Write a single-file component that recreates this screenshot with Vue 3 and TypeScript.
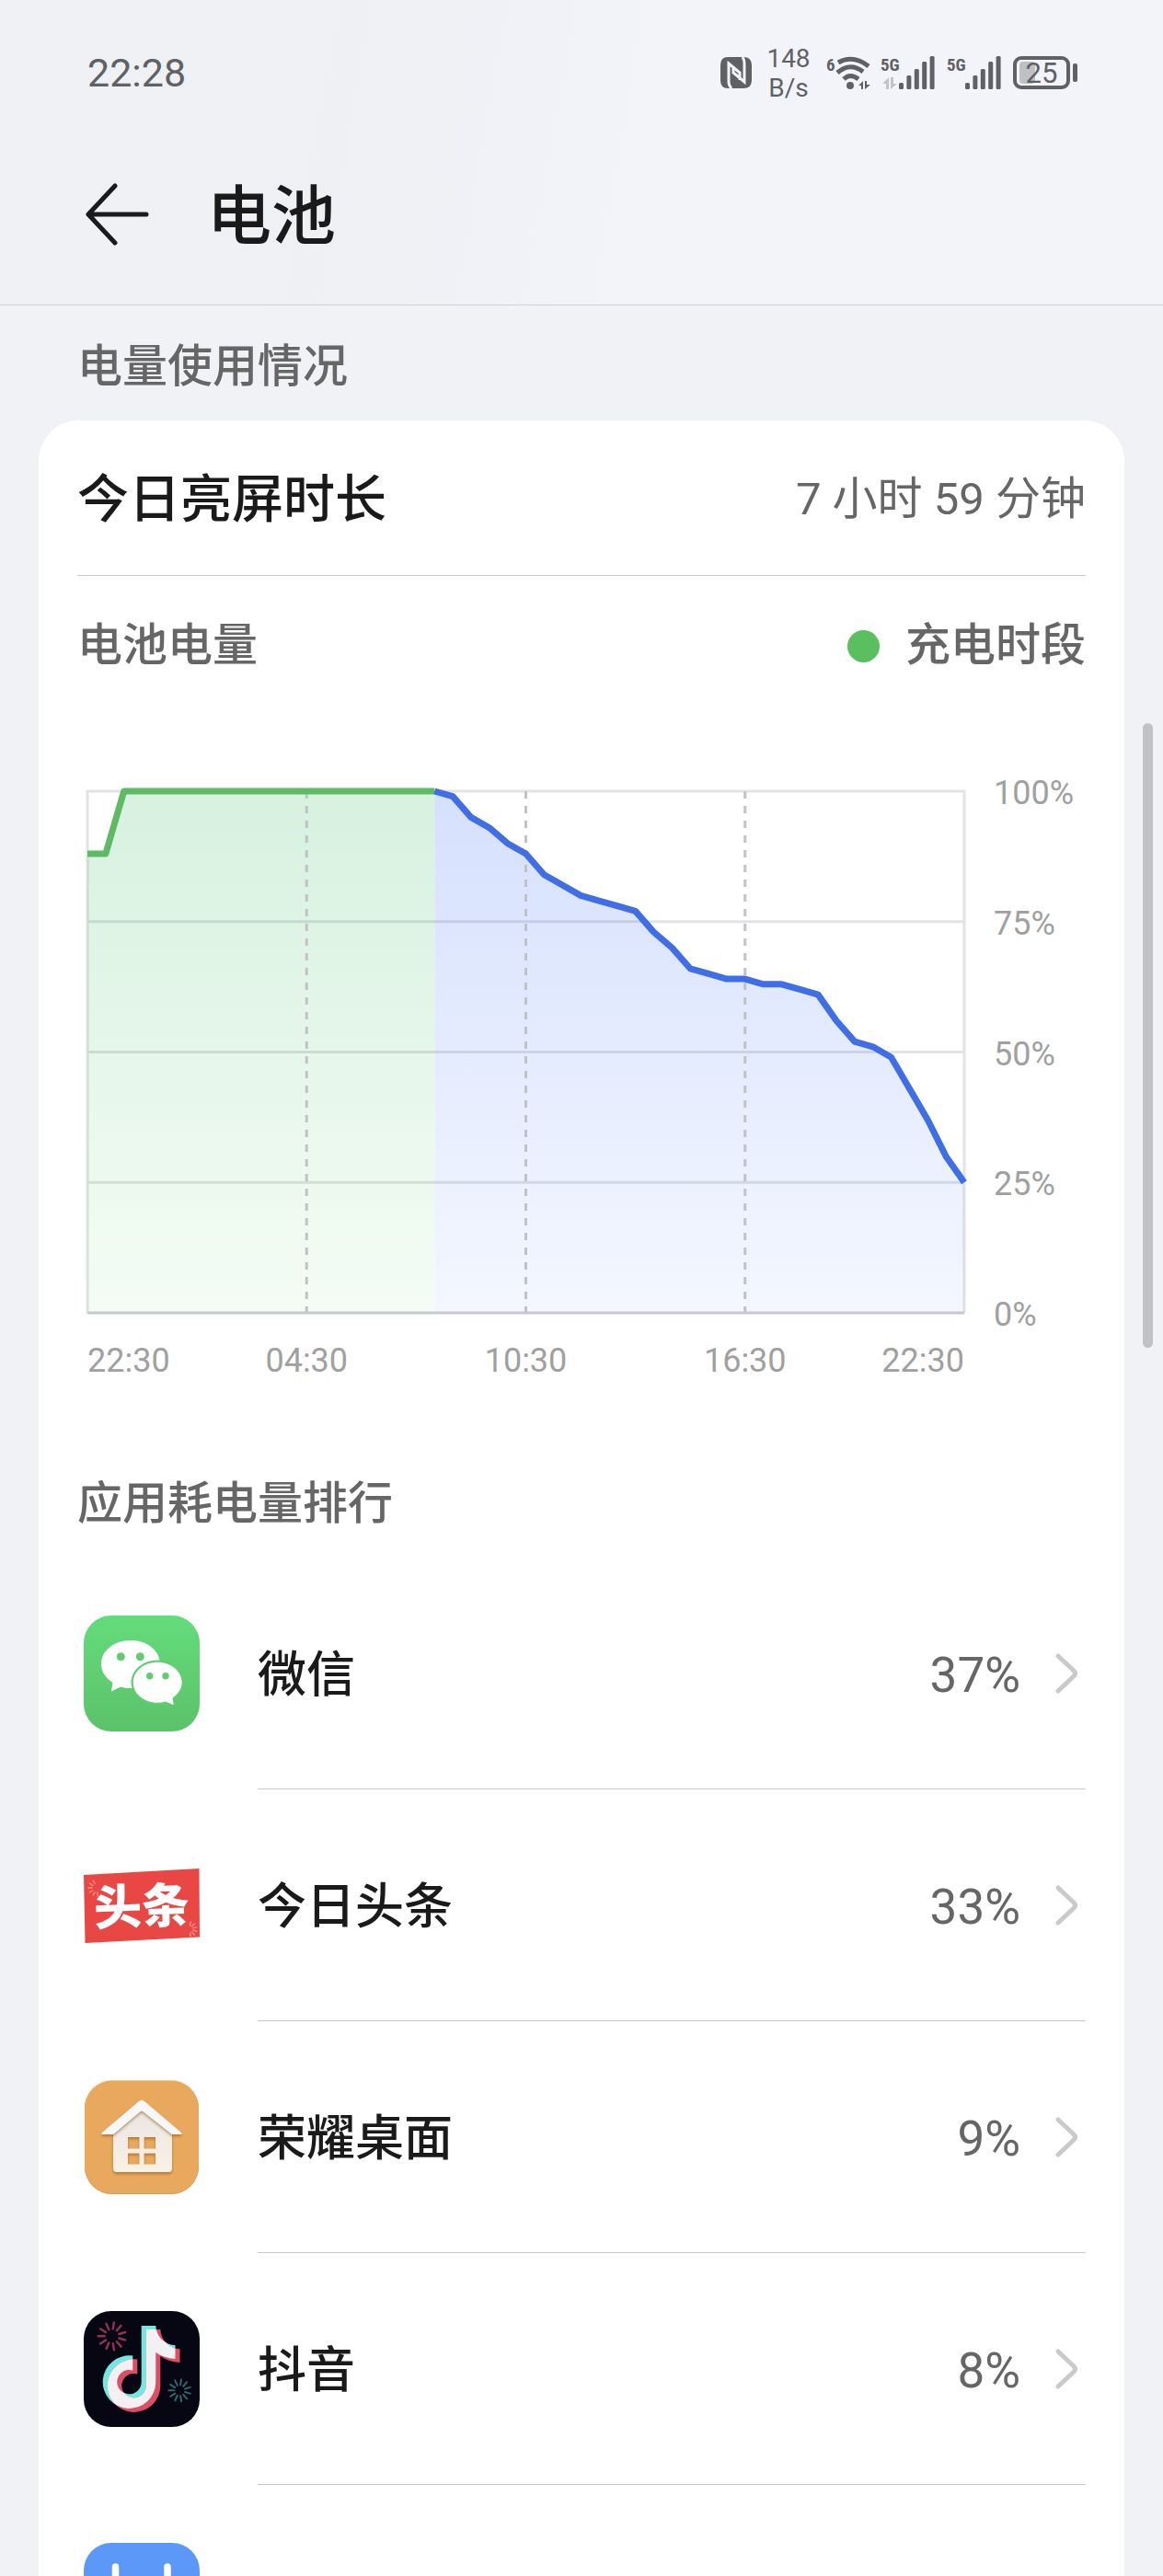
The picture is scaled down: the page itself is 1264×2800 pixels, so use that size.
<script setup lang="ts">
interface AppUsage {
  id: string
  name?: string
  percent?: number
}

const levels: number[] = [
  88, 88, 100, 100, 100, 100, 100, 100, 100, 100, 100, 100, 100, 100, 100, 100, 100,
  100, 100, 100, 99, 95, 93, 90, 88, 84, 82, 80, 79, 78, 77, 73, 70, 66, 65, 64, 64,
  63, 63, 62, 61, 56, 52, 51, 49, 43, 37, 30, 25,
]
const chargeEnd = 19
const lastStep = levels.length - 1

function linePoints(from: number, to: number): string {
  return levels
    .slice(from, to + 1)
    .map((level, i) => `${from + i},${100 - level}`)
    .join(' ')
}

function areaPoints(from: number, to: number): string {
  return `${from},100 ${linePoints(from, to)} ${to},100`
}

const percentLabels = ['100%', '75%', '50%', '25%', '0%']
const timeLabels = ['22:30', '04:30', '10:30', '16:30', '22:30']

const apps: AppUsage[] = [
  { id: 'wechat', name: '微信', percent: 37 },
  { id: 'toutiao', name: '今日头条', percent: 33 },
  { id: 'home', name: '荣耀桌面', percent: 9 },
  { id: 'douyin', name: '抖音', percent: 8 },
  { id: 'calendar' },
]

const signalBars = [7, 15, 22, 30, 36]
const rays = Array.from({ length: 11 }, (_, i) => (i * 360) / 11 + 8)
</script>

<template>
  <div class="screen">
    <header class="top">
      <div class="status">
        <span class="clock">22:28</span>
        <div class="indicators">
          <svg class="nfc" viewBox="0 0 34 34" aria-label="NFC">
            <path fill="#606164" d="M8 0H25Q34 0 34 9V25Q34 34 25 34H8Q0 34 0 25V9Q0 0 8 0Z" />
            <path
              fill="none"
              stroke="#f2f3f7"
              stroke-width="3"
              d="M12 34Q9 31 9 27V7L21 17V25M24 0Q26 3 26 7V27L14 17V10"
            />
          </svg>
          <span class="speed">148<br />B/s</span>
          <svg class="wifi" viewBox="0 0 48 38" aria-label="Wi-Fi 6">
            <text x="1" y="17" class="tiny">6</text>
            <g fill="none" stroke="#606164" stroke-linecap="butt">
              <path stroke-width="5" d="M14 8Q30 -1 47 12" />
              <path stroke-width="5" d="M13 19Q27 7 41 18" />
              <path stroke-width="5" d="M20 26Q27 19 36 26" />
            </g>
            <circle cx="27" cy="33" r="4" fill="#606164" />
            <path fill="#606164" d="M36 33L41 28V37H39V33ZM43 28H45V32H49L43 37Z" />
          </svg>
          <svg v-for="card in 2" :key="card" class="signal" viewBox="0 0 60 38" aria-label="5G">
            <text x="0" y="17" class="tiny">5G</text>
            <path v-if="card === 1" fill="#c2c3c6" d="M2 31L9 24V37H6V31ZM11 24H14V31H18L11 37Z" />
            <rect
              v-for="(h, i) in signalBars"
              :key="h"
              :x="20 + i * 8.4"
              :y="37 - h"
              width="5"
              :height="h"
              rx="1.5"
              fill="#606164"
            />
          </svg>
          <svg class="battery" viewBox="0 0 70 36" aria-label="25%">
            <rect x="7" y="6" width="17" height="24" rx="4" fill="#bfc0c3" />
            <rect x="2" y="2" width="58" height="32" rx="7" fill="none" stroke="#606164" stroke-width="4" />
            <rect x="65" y="8" width="5" height="20" rx="2" fill="#606164" />
            <text x="31" y="29" text-anchor="middle" class="charge">25</text>
          </svg>
        </div>
      </div>
      <div class="title-row">
        <button class="back" type="button" aria-label="返回">
          <svg viewBox="0 0 70 68">
            <path
              d="M33 3L4 34L33 65M4 34H67"
              fill="none"
              stroke="#1a1b1d"
              stroke-width="5"
              stroke-linecap="round"
              stroke-linejoin="round"
            />
          </svg>
        </button>
        <h1>电池</h1>
      </div>
    </header>

    <main>
      <h2 class="caption">电量使用情况</h2>
      <section class="card">
        <div class="row duration">
          <span class="strong">今日亮屏时长</span>
          <span class="muted">7 小时 59 分钟</span>
        </div>
        <div class="row legend">
          <span class="muted medium">电池电量</span>
          <span class="muted medium key"><i class="dot"></i>充电时段</span>
        </div>

        <div class="chart">
          <svg class="plot" viewBox="0 0 48 100" preserveAspectRatio="none" aria-label="电池电量">
            <defs>
              <linearGradient id="charging" x1="0" y1="0" x2="0" y2="1">
                <stop offset="0" stop-color="#d7f1df" />
                <stop offset="1" stop-color="#f4fcf5" />
              </linearGradient>
              <linearGradient id="draining" x1="0" y1="0" x2="0" y2="1">
                <stop offset="0" stop-color="#d5e0fd" />
                <stop offset="1" stop-color="#f4f7ff" />
              </linearGradient>
            </defs>
            <polygon :points="areaPoints(0, chargeEnd)" fill="url(#charging)" />
            <polygon :points="areaPoints(chargeEnd, lastStep)" fill="url(#draining)" />
            <path class="grid" d="M0 100V0H48V100M0 25H48M0 50H48M0 75H48" />
            <path class="dashes" d="M12 0V100M24 0V100M36 0V100" />
            <path class="base" d="M0 100H48" />
            <polyline class="line green" :points="linePoints(0, chargeEnd)" />
            <polyline class="line blue" :points="linePoints(chargeEnd, lastStep)" />
          </svg>
          <div class="y-axis">
            <span v-for="label in percentLabels" :key="label">{{ label }}</span>
          </div>
          <div class="x-axis">
            <span v-for="(label, i) in timeLabels" :key="i">{{ label }}</span>
          </div>
        </div>

        <h2 class="ranking">应用耗电量排行</h2>
        <ul class="apps">
          <li v-for="app in apps" :key="app.id">
            <a class="app" href="#">
              <svg v-if="app.id === 'wechat'" class="icon" viewBox="0 0 126 126">
                <defs>
                  <linearGradient id="wx" x1="0" y1="0" x2="0" y2="1">
                    <stop offset="0" stop-color="#64dc7b" />
                    <stop offset="1" stop-color="#5bc269" />
                  </linearGradient>
                </defs>
                <rect width="126" height="126" rx="30" fill="url(#wx)" />
                <path
                  fill="#fff"
                  d="M51 27C69 27 83 38 83 53S69 79 51 79Q45 79 40 77.500L30 82.500L31.500 73C24 68 19 61 19 53C19 38 33 27 51 27Z"
                />
                <g fill="#5fcd70">
                  <circle cx="40.300" cy="44.700" r="4.500" />
                  <circle cx="61.300" cy="44.700" r="4.500" />
                  <ellipse cx="80.200" cy="72.700" rx="28.800" ry="24.300" />
                </g>
                <path
                  fill="#fff"
                  d="M80.200 50.700C95 50.700 106.700 60.500 106.700 72.700C106.700 79.500 102.500 85.500 96.500 89.500L97.700 97.300L89 93.500Q85 94.700 80.200 94.700C65.500 94.700 53.700 85 53.700 72.700S65.500 50.700 80.200 50.700Z"
                />
                <circle cx="71.700" cy="65.700" r="3.700" fill="#5fcd70" />
                <circle cx="89" cy="65.700" r="3.700" fill="#5fcd70" />
              </svg>

              <svg v-else-if="app.id === 'toutiao'" class="icon" viewBox="0 0 126 126">
                <path fill="#e94744" d="M0 30L125.500 23L126 97.500L1.500 104Z" />
                <g stroke="#f58a84" stroke-width="1.500" stroke-linecap="round">
                  <path
                    v-for="a in rays.slice(5)"
                    :key="a"
                    d="M0 -5V-9"
                    :transform="`translate(14 44) rotate(${a})`"
                  />
                  <path
                    v-for="a in rays.slice(0, 6)"
                    :key="a"
                    d="M0 -4V-8"
                    :transform="`translate(115 89) rotate(${a})`"
                  />
                </g>
                <text x="63" y="83" text-anchor="middle" class="logo-text" transform="rotate(-2 63 64)">头条</text>
              </svg>

              <svg v-else-if="app.id === 'home'" class="icon" viewBox="0 0 126 126">
                <defs>
                  <linearGradient id="wall" x1="0" y1="0" x2="0" y2="1">
                    <stop offset="0" stop-color="#e6e5e4" />
                    <stop offset="1" stop-color="#fbf1e4" />
                  </linearGradient>
                  <filter id="drop" x="-20%" y="-20%" width="140%" height="140%">
                    <feDropShadow dx="0" dy="2" stdDeviation="1.500" flood-color="#8a5517" flood-opacity=".6" />
                  </filter>
                </defs>
                <rect x="1" y="1" width="124" height="124" rx="30" fill="#f6c98c" />
                <rect x="1" y="2" width="124" height="123" rx="30" fill="#d99b53" />
                <rect x="1" y="2" width="124" height="122" rx="30" fill="#e8a95f" />
                <g filter="url(#drop)">
                  <path
                    fill="url(#wall)"
                    fill-rule="evenodd"
                    d="M32 52L63 28L96 52V97Q96 101 92 101H36Q32 101 32 97ZM48 63V75.500H60.500V63ZM65.500 63V75.500H78V63ZM48 80.500V92.500H60.500V80.500ZM65.500 80.500V92.500H78V80.500Z"
                  />
                </g>
                <path
                  fill="#f7f7f8"
                  filter="url(#drop)"
                  d="M60 24Q63 21.500 66 24L106 58Q107.500 60 105 60H96L65 35.500Q63 34 61 35.500L32 60H20.500Q18 60 20 58Z"
                />
              </svg>

              <svg v-else-if="app.id === 'douyin'" class="icon" viewBox="0 0 126 126">
                <defs>
                  <path
                    id="note"
                    d="M62.700 16H78.300A22 22 0 0 0 99.500 37.300V52C91 51.500 84 49 78.300 45V77.200A28.800 28.800 0 1 1 53.300 48.600V64.500A13.200 13.200 0 1 0 62.700 77.200Z"
                  />
                  <clipPath id="note-clip"><use href="#note" /></clipPath>
                </defs>
                <rect width="126" height="126" rx="30" fill="#060713" />
                <g stroke="#8d3352" stroke-width="2.500" stroke-linecap="round">
                  <path
                    v-for="a in rays"
                    :key="a"
                    d="M0 -8V-15"
                    :transform="`translate(30.700 27.300) rotate(${a})`"
                  />
                </g>
                <g stroke="#35656f" stroke-width="2" stroke-linecap="round">
                  <path
                    v-for="a in rays"
                    :key="a"
                    d="M0 -6V-12"
                    :transform="`translate(104.300 86.300) rotate(${a})`"
                  />
                </g>
                <use href="#note" fill="#74e8e0" />
                <use href="#note" x="5" y="4" fill="#dc4d66" />
                <g clip-path="url(#note-clip)"><use href="#note" x="5" y="4" fill="#f2f0f2" /></g>
              </svg>

              <svg v-else class="icon" viewBox="0 0 126 126">
                <rect width="126" height="126" rx="30" fill="#5b98f7" />
                <path d="M34.500 26V60M91 26V60" stroke="#fff" stroke-width="7.500" stroke-linecap="round" />
              </svg>

              <span v-if="app.name" class="detail">
                <span class="name">{{ app.name }}</span>
                <span class="percent">{{ app.percent }}%</span>
                <svg class="chevron" viewBox="0 0 24 44">
                  <path
                    d="M3 3L20 19Q23 22 20 25L3 41"
                    fill="none"
                    stroke="#cacaca"
                    stroke-width="5"
                    stroke-linecap="round"
                  />
                </svg>
              </span>
            </a>
          </li>
        </ul>
      </section>
      <div class="scrollbar"></div>
    </main>
  </div>
</template>

<style>
body {
  margin: 0;
}
</style>

<style scoped>
.screen {
  display: flex;
  flex-direction: column;
  height: 100vh;
  overflow: hidden;
  background: #f1f2f6;
  color: #1a1a1a;
  font-family: Roboto, 'Noto Sans CJK SC', sans-serif;
}

.top {
  flex: none;
  padding-bottom: 23px;
  border-bottom: 1px solid #cfd0d4;
  background: linear-gradient(100deg, #eff1f5 0%, #eff0f4 30%, #f3f4f9 60%, #f3f4f9 100%);
}

.status {
  display: flex;
  align-items: center;
  justify-content: space-between;
  height: 158px;
  padding: 0 93px 0 95px;
  color: #606164;
}

.clock {
  font-size: 43px;
}

.indicators {
  display: flex;
  align-items: center;
  gap: 12px;
}

.indicators svg {
  display: block;
  overflow: visible;
}

.nfc {
  width: 34px;
  height: 34px;
}

.speed {
  width: 56px;
  padding-top: 2px;
  font-size: 28px;
  line-height: 32px;
  text-align: center;
}

.wifi {
  width: 48px;
  height: 38px;
}

.signal {
  width: 60px;
  height: 38px;
}

.battery {
  width: 70px;
  height: 36px;
}

.tiny {
  fill: #606164;
  font-family: 'Roboto Condensed', Roboto, sans-serif;
  font-size: 19px;
  font-weight: 700;
}

.charge {
  fill: #606164;
  font-size: 31px;
}

.title-row {
  display: flex;
  align-items: center;
  gap: 63px;
  height: 150px;
  padding: 0 92px;
}

.back {
  width: 70px;
  height: 68px;
  padding: 0;
  border: 0;
  background: none;
}

.back svg {
  display: block;
}

h1,
h2 {
  margin: 0;
  font-weight: 500;
}

h1 {
  padding-top: 6px;
  font-size: 70px;
  line-height: 104px;
}

main {
  position: relative;
  flex: 1;
  min-height: 0;
}

.caption,
.ranking {
  color: #666;
  font-size: 49px;
}

.caption {
  padding: 8px 84px 0;
  line-height: 117px;
}

.card {
  margin: 0 42px;
  padding: 0 42px;
  border-radius: 44px;
  background: #fff;
}

.row {
  display: flex;
  align-items: center;
  justify-content: space-between;
  line-height: 60px;
}

.duration {
  height: 164px;
  padding-top: 4px;
  border-bottom: 1px solid #c8c8c8;
}

.legend {
  height: 148px;
  padding-top: 2px;
}

.strong {
  font-size: 56px;
  font-weight: 500;
}

.muted {
  color: #666;
  font-size: 49px;
}

.medium {
  font-weight: 500;
}

.key {
  display: flex;
  align-items: center;
  gap: 28px;
}

.dot {
  width: 35px;
  height: 35px;
  border-radius: 50%;
  background: #5abf5f;
}

.chart {
  display: grid;
  grid-template-columns: minmax(0, 1fr) 100px;
  column-gap: 32px;
  padding: 84px 0 74px 11px;
  color: #a0a0a0;
  font-size: 36px;
  line-height: 40px;
}

.plot {
  display: block;
  width: 100%;
  height: 567px;
  overflow: visible;
}

.plot path,
.plot polyline {
  fill: none;
  vector-effect: non-scaling-stroke;
}

.plot .grid {
  stroke: rgb(80 90 100 / 17%);
  stroke-width: 3px;
}

.plot .dashes {
  stroke: #c0c2c6;
  stroke-width: 3px;
  stroke-dasharray: 8 8;
}

.plot .base {
  stroke: #c6c8cb;
  stroke-width: 3px;
}

.plot .line {
  stroke-width: 7px;
  stroke-linejoin: round;
}

.plot .green {
  stroke: #5fba66;
}

.plot .blue {
  stroke: #3f6ee6;
}

.y-axis {
  display: flex;
  flex-direction: column;
  justify-content: space-between;
  margin: -18px 0 -22px;
}

.x-axis {
  display: grid;
  grid-template-columns: 1fr 2fr 2fr 2fr 1fr;
  padding-top: 32px;
  text-align: center;
  white-space: nowrap;
}

.x-axis span:first-child {
  text-align: left;
}

.x-axis span:last-child {
  justify-self: end;
}

.ranking {
  padding-top: 4px;
  line-height: 116px;
}

.apps {
  margin: 0;
  padding: 0;
  list-style: none;
}

.app {
  display: flex;
  align-items: center;
  gap: 63px;
  height: 252px;
  padding-left: 7px;
  color: inherit;
  text-decoration: none;
}

.icon {
  flex: none;
  width: 126px;
  height: 126px;
}

.logo-text {
  fill: #fff;
  font-family: 'Noto Sans CJK SC', sans-serif;
  font-size: 52px;
  font-weight: 900;
}

.detail {
  display: flex;
  flex: 1;
  align-items: center;
  box-sizing: border-box;
  height: 252px;
  padding-right: 9px;
  border-bottom: 1px solid #c8c8c8;
}

.name,
.percent {
  padding-top: 4px;
  font-size: 53px;
  line-height: 60px;
}

.name {
  flex: 1;
  font-weight: 500;
}

.percent {
  color: #666;
}

.chevron {
  width: 24px;
  height: 44px;
  margin-left: 38px;
}

.scrollbar {
  position: absolute;
  top: 454px;
  right: 11px;
  width: 11px;
  height: 679px;
  border-radius: 6px;
  background: #c1c2c5;
}
</style>
